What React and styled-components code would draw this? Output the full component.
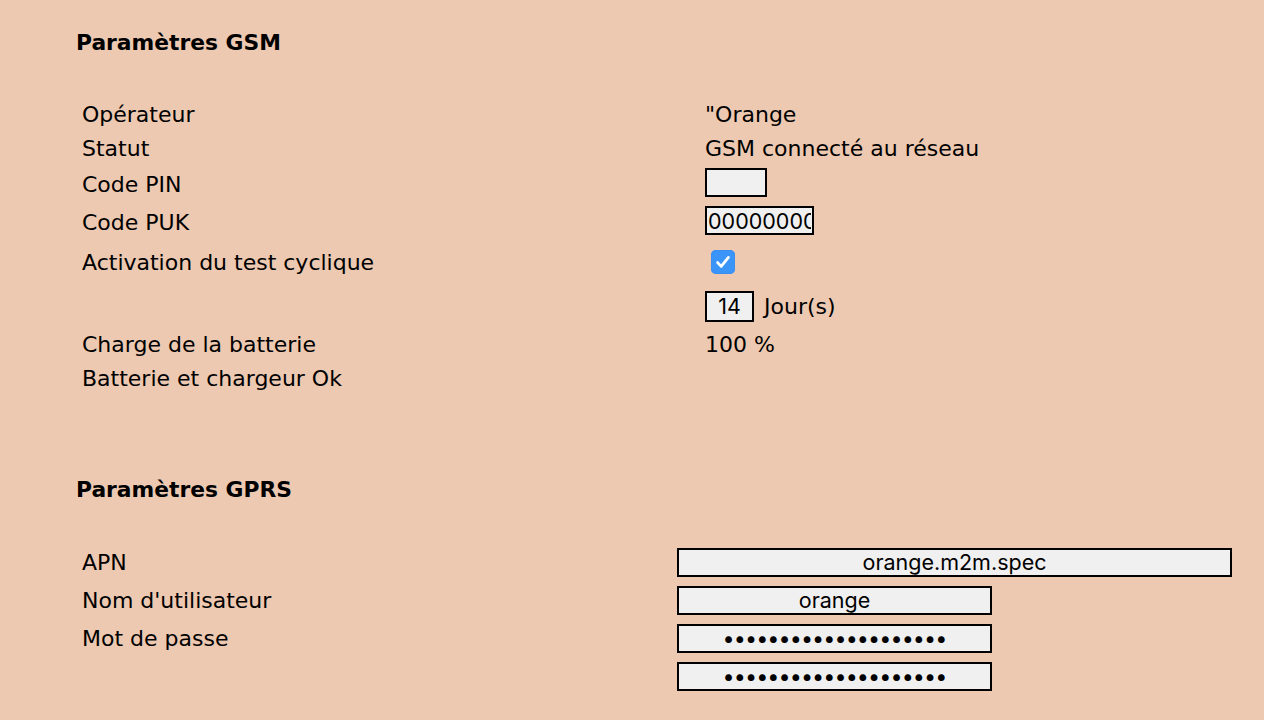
import React from "react";
import styled, { createGlobalStyle } from "styled-components";

const GlobalStyle = createGlobalStyle`
  html, body { margin: 0; padding: 0; }
  body {
    background: #edc9b1;
    font-family: "DejaVu Sans", Verdana, sans-serif;
    color: #000;
  }
`;

const Page = styled.div`
  padding: 26px 0 0 0;
  min-height: 720px;
  box-sizing: border-box;
`;

const Heading = styled.h2`
  margin: ${(p) => p.$mt || 0}px 0 0 76px;
  font-size: 21.8px;
  font-weight: bold;
  line-height: 34px;
  height: 34px;
`;

const Table = styled.div`
  margin: ${(p) => p.$mt}px 0 0 82px;
  display: flex;
  flex-direction: column;
`;

const Row = styled.div`
  display: grid;
  grid-template-columns: ${(p) => p.$labelW}px 1fr;
  align-items: center;
  height: ${(p) => p.$h}px;
  font-size: 22px;
  line-height: 26px;
  white-space: nowrap;
`;

const Label = styled.div`
  padding-top: 2px;
`;

const Value = styled.div`
  display: flex;
  align-items: center;
`;

const Text = styled.span`
  padding-top: 2px;
`;

const Field = styled.input`
  box-sizing: border-box;
  width: ${(p) => p.$w}px;
  height: ${(p) => p.$hgt || 29}px;
  margin: 0 0 ${(p) => p.$lift || 0}px 0;
  padding: 0 1px;
  border: 2px solid #000;
  border-radius: 0;
  background: #f0f0f0;
  font-family: Inter, "Liberation Sans", sans-serif;
  font-size: 21.5px;
  letter-spacing: ${(p) => (p.type === "password" ? "-0.9px" : "0")};
  color: #000;
  text-align: ${(p) => p.$align || "center"};
  outline: none;
`;

const Check = styled.span`
  display: inline-flex;
  align-items: center;
  justify-content: center;
  width: 24px;
  height: 24px;
  margin-left: 6px;
  border-radius: 5px;
  background: #3b95f8;
  box-shadow: inset 0 0 0 1px #3a8ff0;
`;

const Unit = styled.span`
  margin-left: 10px;
  padding-top: 2px;
`;

const gsmRows = [
  { label: "Opérateur", h: 34, value: '"Orange' },
  { label: "Statut", h: 34, value: "GSM connecté au réseau" },
  { label: "Code PIN", h: 38, field: { w: 62, v: "", lift: 3 } },
  { label: "Code PUK", h: 38, field: { w: 109, v: "00000000", lift: 3, align: "left" } },
  { label: "Activation du test cyclique", h: 42, check: true },
  { label: "", h: 46, days: true },
  { label: "Charge de la batterie", h: 30, value: "100 %" },
  { label: "Batterie et chargeur Ok", h: 38 },
];

const gprsRows = [
  { label: "APN", w: 555, v: "orange.m2m.spec" },
  { label: "Nom d'utilisateur", w: 315, v: "orange" },
  { label: "Mot de passe", w: 315, v: "12345678901234567890", pw: true },
  { label: "", w: 315, v: "12345678901234567890", pw: true },
];

export default function App() {
  return (
    <Page>
      <GlobalStyle />
      <Heading>Paramètres GSM</Heading>
      <Table $mt={37}>
        {gsmRows.map((r, i) => (
          <Row key={i} $h={r.h} $labelW={623}>
            <Label>{r.label}</Label>
            <Value>
              {r.value && <Text>{r.value}</Text>}
              {r.field && (
                <Field
                  type="text"
                  $w={r.field.w}
                  $lift={r.field.lift}
                  $align={r.field.align}
                  defaultValue={r.field.v}
                />
              )}
              {r.check && (
                <Check>
                  <svg width="24" height="24" viewBox="0 0 24 24">
                    <path
                      d="M6.6 12.6 L10.2 16.4 L17.4 7.4"
                      fill="none"
                      stroke="#fff"
                      strokeWidth="2.8"
                      strokeLinecap="round"
                      strokeLinejoin="round"
                    />
                  </svg>
                </Check>
              )}
              {r.days && (
                <>
                  <Field type="text" $w={49} $hgt={31} defaultValue="14" />
                  <Unit>Jour(s)</Unit>
                </>
              )}
            </Value>
          </Row>
        ))}
      </Table>

      <Heading $mt={76}>Paramètres GPRS</Heading>
      <Table $mt={36}>
        {gprsRows.map((r, i) => (
          <Row key={i} $h={38} $labelW={595}>
            <Label>{r.label}</Label>
            <Value>
              <Field
                type={r.pw ? "password" : "text"}
                $w={r.w}
                $lift={0}
                defaultValue={r.v}
              />
            </Value>
          </Row>
        ))}
      </Table>
    </Page>
  );
}
